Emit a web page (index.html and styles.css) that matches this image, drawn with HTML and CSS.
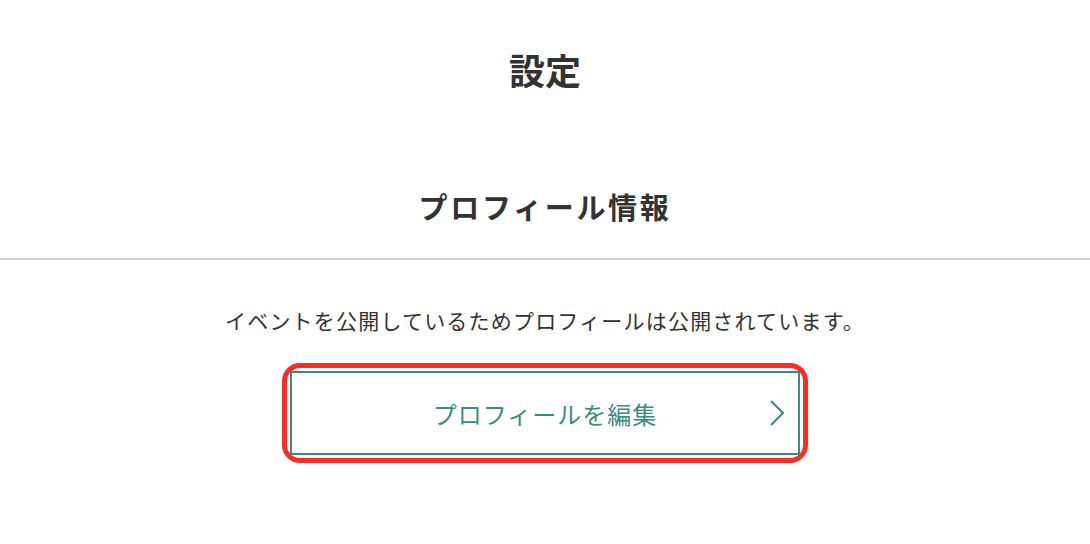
FILE: index.html
```html
<!DOCTYPE html>
<html lang="ja">

<head>
    <meta charset="UTF-8">
    <meta name="viewport" content="width=device-width, initial-scale=1.0">
    <title>設定</title>

    <link rel="stylesheet" href="styles.css">
</head>

<body>
    <h1 class="page-title">設定</h1>

    <div class="section">
        <h2 class="section-title">プロフィール情報</h2>
        <p class="notice">イベントを公開しているためプロフィールは公開されています。</p>

        <div class="highlight">
            <a class="edit-button" href="#">
                <span></span>
                <span class="edit-label">プロフィールを編集</span>
                <svg class="chevron" width="14" height="26" viewBox="0 0 14 26">
                    <polyline points="1,1 13,13 1,25" fill="none" stroke="#3b8a84" stroke-width="2" />
                </svg>
            </a>
        </div>
    </div>
</body>

</html>
```

FILE: styles.css
```css
body {
    font-family: 'Noto Sans CJK JP', 'Noto Sans', sans-serif;
    background-color: #fff;
    color: #333;
    margin: 0;
    padding: 0;
}

.page-title {
    margin: 0;
    padding-top: 42px;
    font-size: 36px;
    line-height: 54px;
    font-weight: bold;
    text-align: center;
}

.section-title {
    margin: 90px 0 0;
    padding-bottom: 32px;
    font-size: 29px;
    line-height: 40px;
    letter-spacing: 2.7px;
    font-weight: bold;
    text-align: center;
    border-bottom: 2px solid #cfcfcf;
}

.notice {
    margin: 45px 0 0;
    font-size: 21px;
    line-height: 30px;
    letter-spacing: 1.2px;
    text-align: center;
}

.highlight {
    width: 510px;
    margin: 28px auto 0;
    padding: 3px;
    border: 5px solid #ff2d21;
    border-radius: 18px;
}

.edit-button {
    display: grid;
    grid-template-columns: 1fr auto 1fr;
    align-items: center;
    height: 80px;
    border: 2px solid #3b8a84;
    color: #3b8a84;
    text-decoration: none;
}

.edit-label {
    font-size: 24px;
    letter-spacing: 1px;
}

.chevron {
    justify-self: end;
    margin-right: 14px;
}
```
